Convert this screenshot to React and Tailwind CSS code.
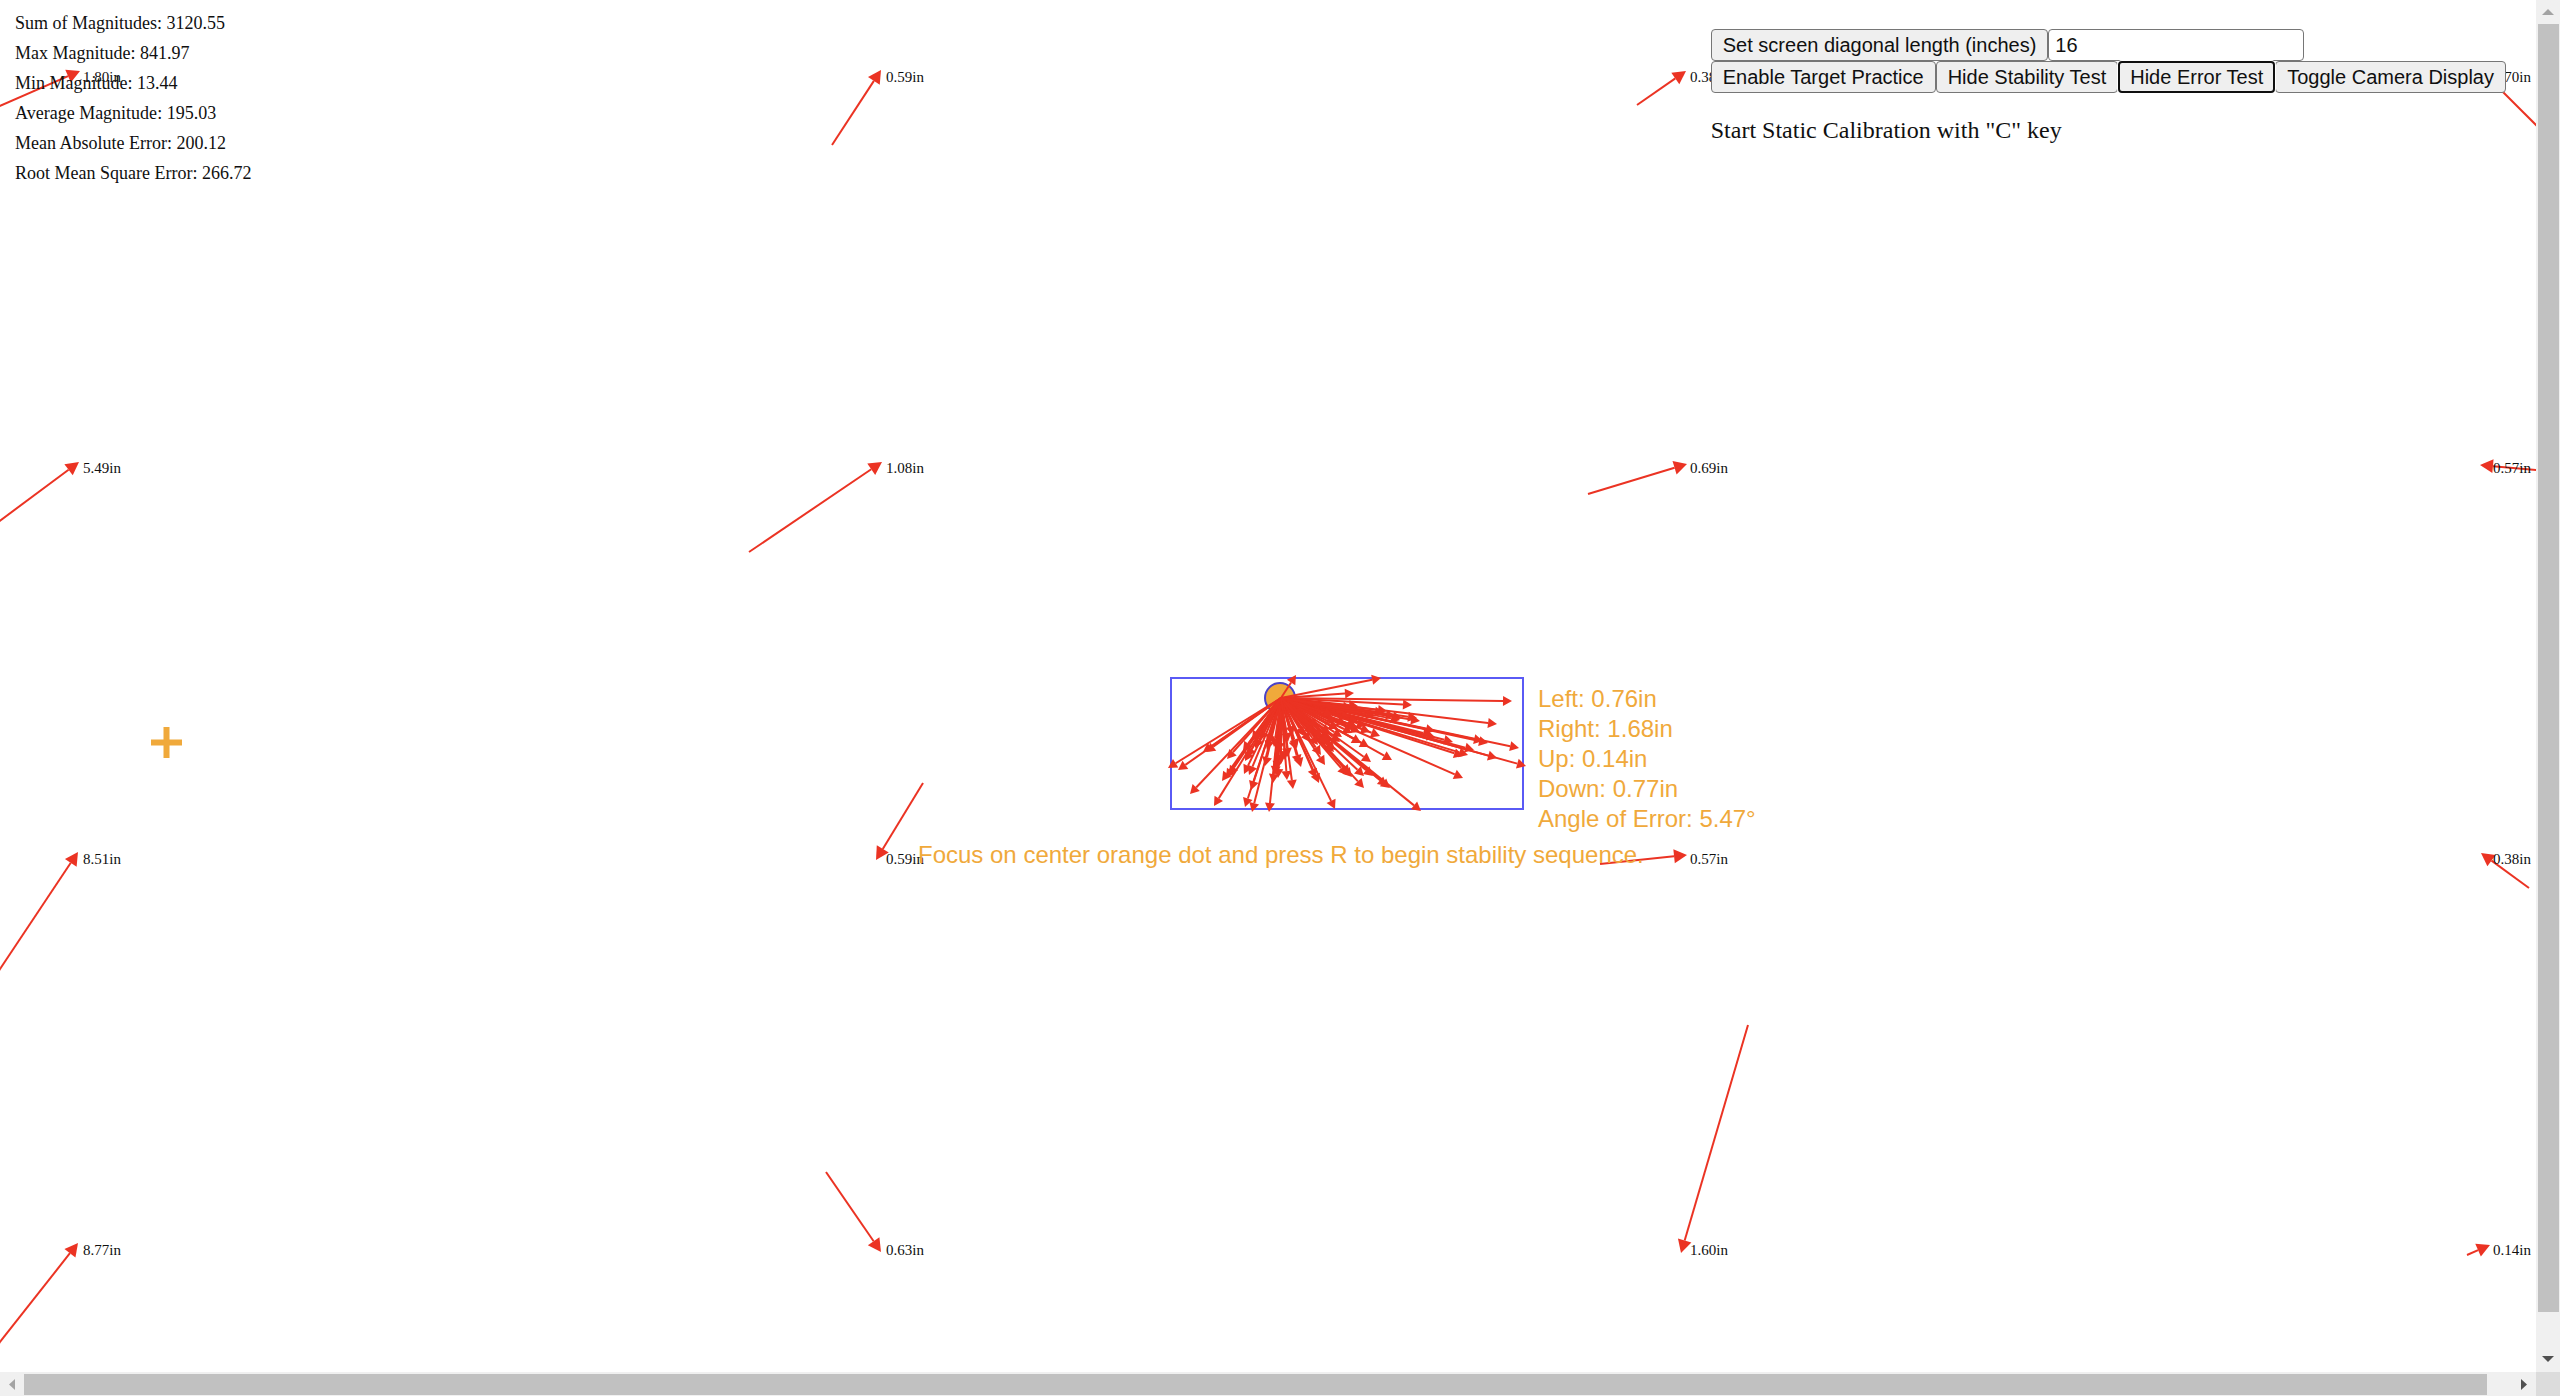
import React from "react";

const RED = "#eb3323";
const ORANGE = "#f0a93b";

// Calibration targets: arrow start, arrow tip, label position and distance.
const TARGETS = [
  { from: [-30, 119], to: [80, 71], label: [83, 69], text: "1.80in" },
  { from: [832, 145], to: [881, 70], label: [886, 69], text: "0.59in" },
  { from: [1637, 105], to: [1686, 71], label: [1690, 69], text: "0.38in" },
  { from: [2550, 139], to: [2483, 72], label: [2493, 69], text: "0.70in" },
  { from: [-30, 543], to: [79, 462], label: [83, 460], text: "5.49in" },
  { from: [749, 552], to: [882, 462], label: [886, 460], text: "1.08in" },
  { from: [1588, 494], to: [1687, 464], label: [1690, 460], text: "0.69in" },
  { from: [2560, 472], to: [2480, 465], label: [2493, 460], text: "0.57in" },
  { from: [-30, 1014], to: [78, 852], label: [83, 851], text: "8.51in" },
  { from: [923, 783], to: [876, 860], label: [886, 851], text: "0.59in" },
  { from: [1600, 864], to: [1687, 855], label: [1690, 851], text: "0.57in" },
  { from: [2529, 888], to: [2481, 853], label: [2493, 851], text: "0.38in" },
  { from: [-30, 1380], to: [78, 1243], label: [83, 1242], text: "8.77in" },
  { from: [826, 1172], to: [881, 1252], label: [886, 1242], text: "0.63in" },
  { from: [1748, 1025], to: [1681, 1253], label: [1690, 1242], text: "1.60in" },
  { from: [2467, 1255], to: [2490, 1245], label: [2493, 1242], text: "0.14in" },
];

// Gaze samples recorded around the centre dot.
const CENTRE = [1281, 698];
const SAMPLES = [
  [1168, 768], [1178, 770], [1190, 794], [1214, 806], [1203, 752], [1206, 752],
  [1222, 781], [1226, 778], [1229, 775], [1227, 759], [1244, 774], [1249, 775],
  [1245, 761], [1243, 751], [1247, 757], [1245, 807], [1252, 812], [1251, 790],
  [1269, 812], [1273, 783], [1278, 778], [1275, 775], [1265, 766], [1267, 750],
  [1287, 780], [1293, 789], [1301, 767], [1299, 764], [1296, 750], [1288, 757],
  [1285, 760], [1296, 675], [1381, 678], [1354, 693], [1358, 706], [1412, 705],
  [1387, 711], [1402, 718], [1420, 721], [1417, 718], [1380, 736], [1370, 732],
  [1392, 760], [1369, 747], [1361, 743], [1371, 762], [1364, 776], [1364, 788],
  [1352, 777], [1347, 775], [1350, 774], [1390, 788], [1387, 786], [1373, 776],
  [1421, 811], [1335, 809], [1319, 783], [1316, 778], [1325, 765], [1321, 755],
  [1360, 732], [1355, 729], [1342, 737], [1335, 750], [1332, 746], [1297, 748],
  [1293, 735], [1512, 701], [1497, 724], [1519, 748], [1488, 743], [1483, 741],
  [1453, 742], [1435, 731], [1436, 738], [1432, 735], [1526, 766], [1497, 758],
  [1474, 750], [1468, 755], [1463, 756], [1463, 778],
  [1352, 708], [1345, 712], [1350, 718], [1358, 722], [1346, 724], [1352, 733],
  [1338, 729], [1340, 742], [1330, 738], [1326, 744], [1329, 742], [1318, 745],
  [1310, 742], [1304, 736], [1384, 713], [1375, 716], [1366, 726], [1358, 728],
  [1330, 733], [1322, 737], [1314, 734], [1318, 727], [1336, 722], [1333, 715],
  [1400, 720], [1395, 716], [1277, 770], [1281, 764], [1279, 752], [1274, 747],
  [1268, 744], [1260, 740], [1255, 748], [1252, 740], [1288, 742], [1334, 752],
];

const STATS = [
  ["Sum of Magnitudes", "3120.55"],
  ["Max Magnitude", "841.97"],
  ["Min Magnitude", "13.44"],
  ["Average Magnitude", "195.03"],
  ["Mean Absolute Error", "200.12"],
  ["Root Mean Square Error", "266.72"],
];

const STABILITY = [
  "Left: 0.76in",
  "Right: 1.68in",
  "Up: 0.14in",
  "Down: 0.77in",
  "Angle of Error: 5.47°",
];

function Arrow({ from, to, head, half }) {
  const dx = to[0] - from[0];
  const dy = to[1] - from[1];
  const len = Math.hypot(dx, dy);
  const ux = dx / len;
  const uy = dy / len;
  const bx = to[0] - ux * head;
  const by = to[1] - uy * head;
  return (
    <g>
      <line x1={from[0]} y1={from[1]} x2={bx} y2={by} stroke={RED} strokeWidth="2" />
      <polygon
        fill={RED}
        points={`${to[0]},${to[1]} ${bx - uy * half},${by + ux * half} ${bx + uy * half},${by - ux * half}`}
      />
    </g>
  );
}

function Plot() {
  return (
    <div className="absolute inset-0 overflow-hidden">
      <svg className="block h-full w-full" aria-hidden="true">
        <rect x="1171" y="678" width="352" height="131" fill="none" stroke="#5a5af5" strokeWidth="2" />
        <circle cx="1280" cy="698" r="15" fill={ORANGE} stroke="#4a42c8" strokeWidth="2" />
        {SAMPLES.map((s, i) => (
          <Arrow key={i} from={CENTRE} to={s} head={9} half={5} />
        ))}
        {TARGETS.map((t, i) => (
          <Arrow key={i} from={t.from} to={t.to} head={13} half={7} />
        ))}
        <path d="M151 742.5H182M166.500 727V758" stroke={ORANGE} strokeWidth="6" />
      </svg>
      {TARGETS.map((t, i) => (
        <span
          key={i}
          className="absolute text-[15px] leading-4 whitespace-nowrap"
          style={{ left: t.label[0], top: t.label[1] }}
        >
          {t.text}
        </span>
      ))}
      <ul className="absolute top-[684px] left-[1538px] font-['Liberation_Sans',sans-serif] text-2xl leading-[30px] whitespace-nowrap text-[#f0a93b]">
        {STABILITY.map((s) => (
          <li key={s}>{s}</li>
        ))}
      </ul>
      <p className="absolute top-[840px] left-[918px] font-['Liberation_Sans',sans-serif] text-2xl leading-[30px] whitespace-nowrap text-[#f0a93b]">
        Focus on center orange dot and press R to begin stability sequence.
      </p>
    </div>
  );
}

function Button({ children, focused }) {
  return (
    <button
      type="button"
      className={
        focused
          ? "relative z-10 h-8 rounded-sm border-2 border-[#101010] bg-[#efefef] px-2.5 whitespace-nowrap ring-1 ring-white"
          : "h-8 rounded-sm border border-[#767676] bg-[#efefef] px-[11px] whitespace-nowrap"
      }
    >
      {children}
    </button>
  );
}

function Controls() {
  return (
    <div className="pt-[29px]">
      <div className="font-['Liberation_Sans',sans-serif] text-xl leading-7">
        <div className="flex">
          <Button>Set screen diagonal length (inches)</Button>
          <input
            type="text"
            aria-label="Screen diagonal length (inches)"
            defaultValue="16"
            className="h-8 w-64 rounded-sm border border-[#767676] bg-white px-1.5"
          />
        </div>
        <div className="flex">
          <Button>Enable Target Practice</Button>
          <Button>Hide Stability Test</Button>
          <Button focused>Hide Error Test</Button>
          <Button>Toggle Camera Display</Button>
        </div>
      </div>
      <p className="mt-[23px] text-2xl leading-7">Start Static Calibration with "C" key</p>
    </div>
  );
}

function Triangle({ points, fill }) {
  return (
    <svg width="24" height="24" viewBox="0 0 24 24" className="block shrink-0" aria-hidden="true">
      <polygon points={points} fill={fill} />
    </svg>
  );
}

export default function App() {
  return (
    <div className="grid h-screen grid-cols-[minmax(0,1fr)_24px] grid-rows-[minmax(0,1fr)_24px] bg-white font-['Liberation_Serif',serif] text-[#101010]">
      <main className="relative overflow-hidden">
        <Plot />
        <div className="relative flex items-start justify-between pr-[30px] pl-[15px]">
          <ul className="pt-2 text-lg leading-[30px]">
            {STATS.map(([name, value]) => (
              <li key={name}>
                {name}: {value}
              </li>
            ))}
          </ul>
          <Controls />
        </div>
      </main>

      <div className="flex flex-col bg-[#f0f0f0]">
        <Triangle points="6,15 18,15 12,9" fill="#a3a3a3" />
        <div className="flex flex-1 flex-col pr-px pl-0.5">
          <div className="h-[97.3%] bg-[#c1c1c1]" />
        </div>
        <Triangle points="6,8 18,8 12,14" fill="#505050" />
      </div>

      <div className="flex bg-[#f0f0f0]">
        <Triangle points="15,7 15,18 9,12.500" fill="#a3a3a3" />
        <div className="flex flex-1 pt-0.5 pb-px">
          <div className="w-[99%] bg-[#c1c1c1]" />
        </div>
        <Triangle points="9,7 9,18 15,12.500" fill="#505050" />
      </div>
      <div className="bg-[#dcdcdc]" />
    </div>
  );
}
